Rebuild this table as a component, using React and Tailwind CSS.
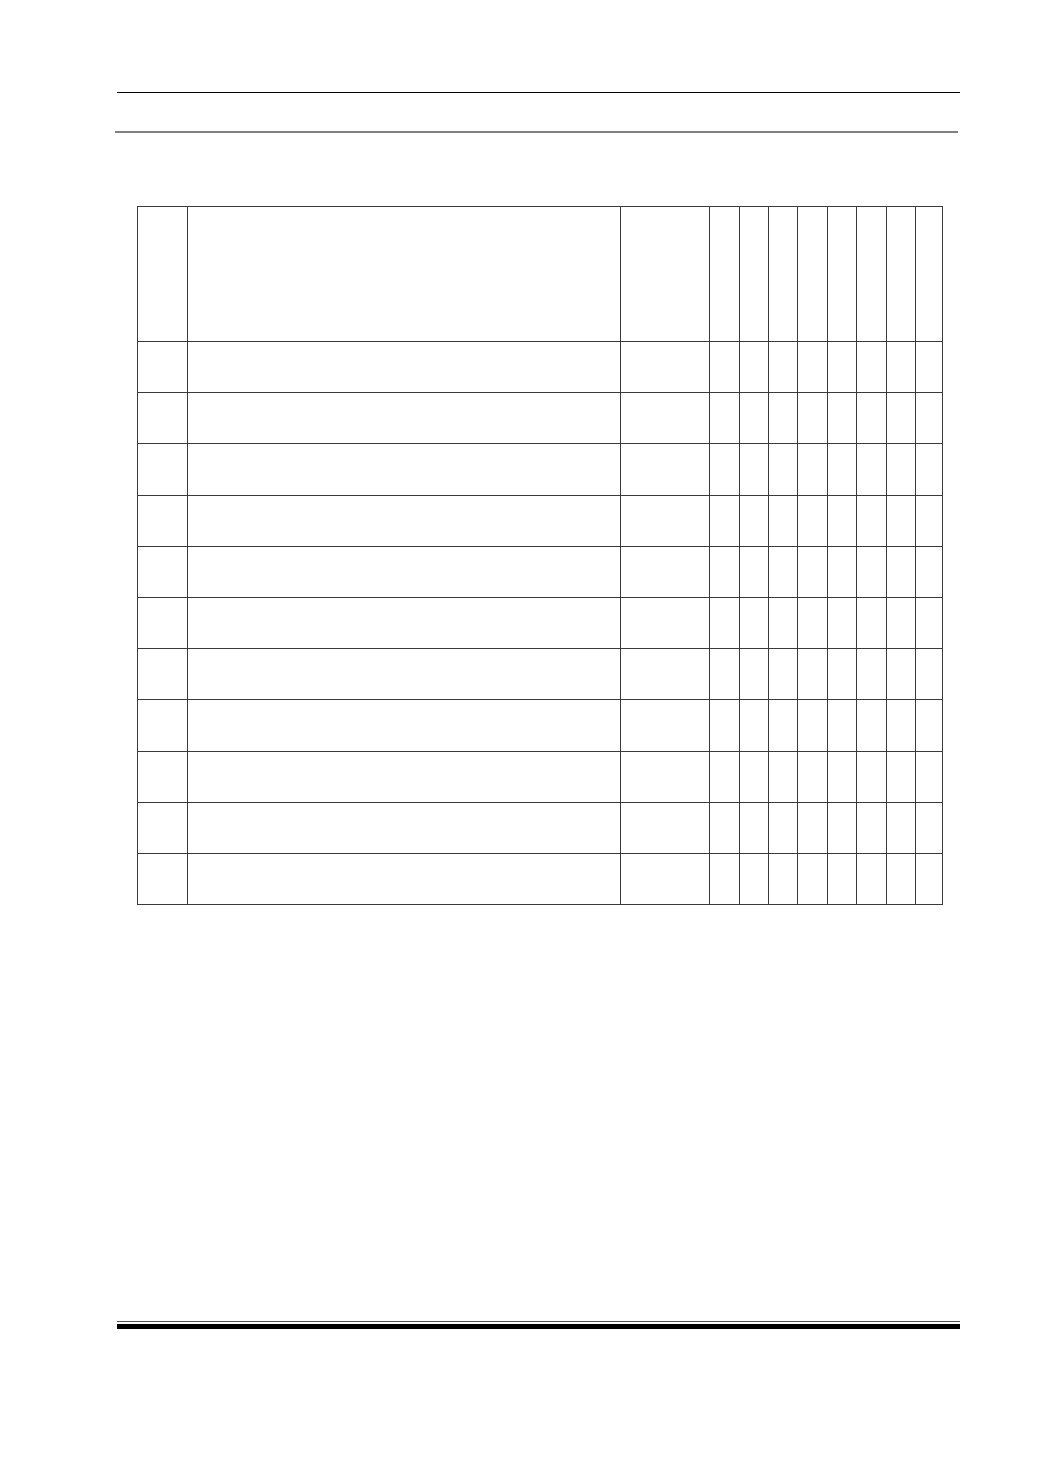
import React from "react";

const cols = [50, 433, 89, 30, 29, 29, 30, 29, 30, 29, 27];
const rows = Array.from({ length: 11 });

const App = () => {
  return (
    <main className="w-[1040px] h-[1473px] bg-white flex flex-col font-['Liberation_Sans',sans-serif]">
      {/* header rules */}
      <div className="ml-[117px] w-[843px] mt-[92px] h-px bg-black" />
      <div className="ml-[115px] w-[843px] mt-[38px] h-[2px] bg-[#808080]" />

      {/* empty table */}
      <div className="ml-[137px] mt-[73px]">
        <table className="table-fixed border-collapse w-[805px]">
          <colgroup>
            {cols.map((w, i) => (
              <col key={i} style={{ width: w }} />
            ))}
          </colgroup>
          <tbody>
            <tr className="h-[135px]">
              {cols.map((_, i) => (
                <td key={i} className="border border-[#3a3a3a] p-0" />
              ))}
            </tr>
            {rows.map((_, r) => (
              <tr key={r} className="h-[51.2px]">
                {cols.map((_, i) => (
                  <td key={i} className="border border-[#3a3a3a] p-0" />
                ))}
              </tr>
            ))}
          </tbody>
        </table>
      </div>

      {/* footer rules */}
      <div className="mt-auto mb-[144px] ml-[117px] w-[843px] flex flex-col">
        <div className="h-px bg-[#555]" />
        <div className="h-[2px]" />
        <div className="h-[5px] bg-black" />
      </div>
    </main>
  );
};

export default App;
